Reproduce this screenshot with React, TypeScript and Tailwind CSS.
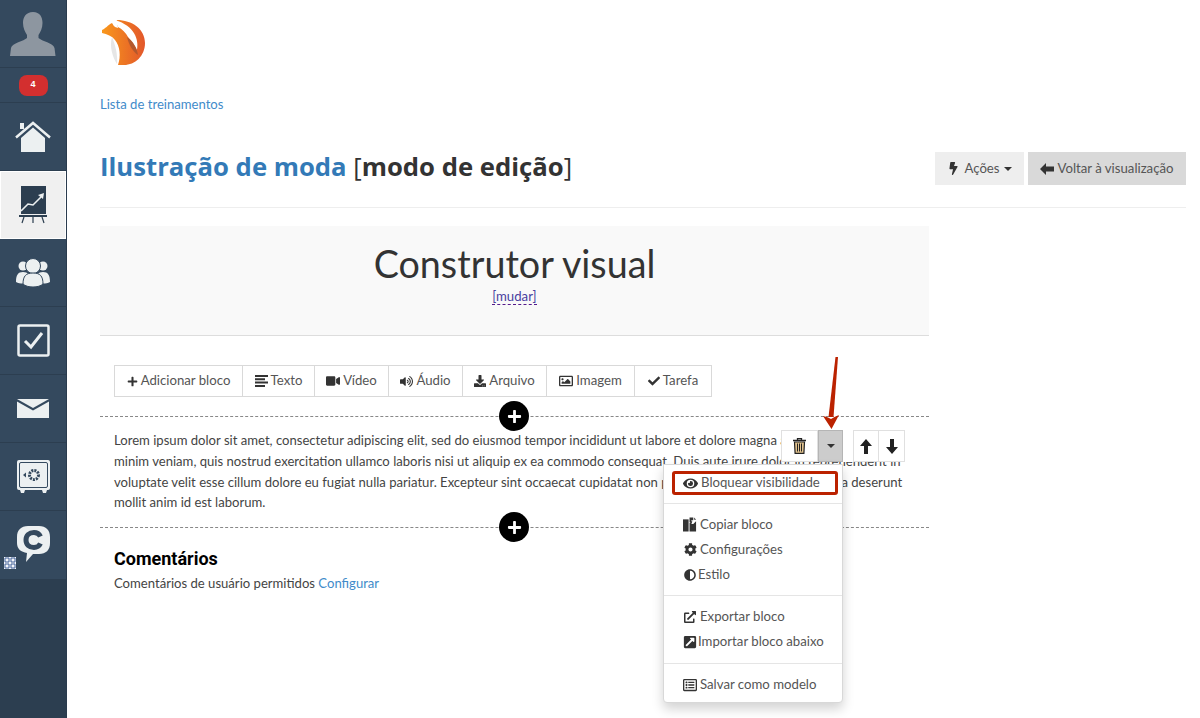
import React from "react";
import {
  FaBolt,
  FaPlus,
  FaVideo,
  FaVolumeUp,
  FaDownload,
  FaRegImage,
  FaCheck,
  FaEye,
  FaCog,
  FaAdjust,
  FaExternalLinkAlt,
  FaExternalLinkSquareAlt,
  FaRegListAlt,
} from "react-icons/fa";

const font = "font-['Lato','Open_Sans',sans-serif]";

const SideRow = ({ active, children }: { active?: boolean; children: React.ReactNode }) => (
  <div
    className={
      active
        ? "h-[68px] flex items-center justify-center bg-[#f0f0f0] border border-white"
        : "h-[68px] flex items-center justify-center border-b border-[#2c3e50]"
    }
  >
    {children}
  </div>
);

const Sidebar = () => (
  <aside className="w-[67px] shrink-0 h-[718px] bg-[#2c3e50] flex flex-col border-r border-[#2a3b4e]">
    <div className="bg-[#34495e]">
      <SideRow>
        <svg width="46" height="44" viewBox="0 0 46 44">
          <path
            d="M23 0c7 0 9.500 5 9.500 11 0 5-2 9-4 12v3c3 3 15 5 16 10l1 8H0l1-8c1-5 13-7 16-10v-3c-2-3-4-7-4-12C13 5 16 0 23 0z"
            fill="#8d96a0"
          />
        </svg>
      </SideRow>
      <div className="h-[35px] flex items-center justify-center border-b border-[#2c3e50]">
        <span className="w-[29px] h-[21px] rounded-lg bg-[#d32f2f] text-white text-[9px] font-bold flex items-center justify-center font-['Liberation_Sans',sans-serif]">
          4
        </span>
      </div>
      <SideRow>
        <svg width="36" height="32" viewBox="0 0 36 32">
          <path d="M1 16.500 18 2l17 14.500" fill="none" stroke="#ecf0f1" strokeWidth="2.500" />
          <path d="M6 17 18 6.500 30 17v14H6z" fill="#ecf0f1" />
          <rect x="5" y="2" width="4" height="6" fill="#ecf0f1" />
        </svg>
      </SideRow>
      <SideRow active>
        <svg width="28" height="38" viewBox="0 0 28 38">
          <rect x="2" y="0" width="25" height="28" fill="#2c3e50" />
          <path d="M2 25l7-7 5 1 8-8" fill="none" stroke="#ecf0f1" strokeWidth="1.600" />
          <path d="M19 9l6-2-1 6z" fill="#ecf0f1" />
          <path d="M0 29h28v2H0z" fill="#2c3e50" />
          <path d="M5 31l-2 6M14 31v6M23 31l2 6" stroke="#2c3e50" strokeWidth="1.200" />
        </svg>
      </SideRow>
      <SideRow>
        <svg width="34" height="30" viewBox="0 0 34 30" fill="#ecf0f1">
          <circle cx="7" cy="8" r="4.500" />
          <circle cx="27" cy="8" r="4.500" />
          <path d="M0 24c0-7 2-10 7-10s7 3 7 10c-4 2-10 2-14 0zM20 24c0-7 2-10 7-10s7 3 7 10c-4 2-10 2-14 0z" />
          <circle cx="17" cy="8" r="7.500" stroke="#34495e" strokeWidth="1" />
          <path d="M7 26c0-8 3-11 10-11s10 3 10 11c-4 4-16 4-20 0z" stroke="#34495e" strokeWidth="1" />
        </svg>
      </SideRow>
      <SideRow>
        <svg width="33" height="33" viewBox="0 0 33 33">
          <rect x="1.500" y="1.500" width="30" height="30" rx="1.500" fill="none" stroke="#ecf0f1" strokeWidth="2.500" />
          <path d="M8 17l6 6L25 9" fill="none" stroke="#ecf0f1" strokeWidth="3" />
        </svg>
      </SideRow>
      <SideRow>
        <svg width="32" height="19" viewBox="0 0 32 19" fill="#ecf0f1">
          <path d="M0 0h32L16 9z" />
          <path d="M0 2.500l16 9 16-9V19H0z" />
        </svg>
      </SideRow>
      <SideRow>
        <svg width="33" height="33" viewBox="0 0 33 33">
          <rect x="0" y="0" width="33" height="30" rx="2" fill="#ecf0f1" />
          <rect x="2.500" y="2.500" width="28" height="25" rx="1.500" fill="none" stroke="#34495e" strokeWidth="1" />
          <circle cx="17" cy="15" r="4.500" fill="none" stroke="#34495e" strokeWidth="3" strokeDasharray="2 1" />
          <path d="M6 15l3-2.500v5z" fill="#34495e" />
          <path d="M3 30h5l-1 3H4zM25 30h5l-1 3h-3z" fill="#ecf0f1" />
        </svg>
      </SideRow>
      <div className="relative h-[68px] flex items-center justify-center">
        <svg width="33" height="37" viewBox="0 0 33 37" className="mb-[2px]">
          <path
            d="M11 0h11c7 0 11 4 11 11v6c0 7-4 11-11 11h-6l-7 8 1-9C4 26 0 23 0 17v-6C0 4 4 0 11 0z"
            fill="#ecf0f1"
          />
          <path d="M23.500 10.500C22 7.500 20 6.500 17 6.500c-5 0-8 3-8 7.500s3 7.500 8 7.500c3 0 5-1 6.500-4" fill="none" stroke="#34495e" strokeWidth="5" />
        </svg>
        <svg width="12" height="12" viewBox="0 0 12 12" className="absolute left-[4px] top-[46px]">
          <rect width="12" height="12" fill="#f4f6fa" />
          <path d="M1 1h4v4H1zM7 1h4v4H7zM1 7h4v4H1zM7 7h4v4H7z" fill="none" stroke="#3f5f96" strokeWidth="1" />
        </svg>
      </div>
    </div>
  </aside>
);

const AlignIcon = () => (
  <svg width="13" height="12" viewBox="0 0 13 12" fill="currentColor">
    <path d="M0 0h13v2H0zM0 3.300h10v2H0zM0 6.600h13v2H0zM0 10h10v2H0z" />
  </svg>
);

const ArrowLeftIcon = () => (
  <svg width="14" height="12" viewBox="0 0 14 12" fill="currentColor">
    <path d="M0 6l6-6v3.500h8v5H6V12z" />
  </svg>
);

const ArrowUpIcon = () => (
  <svg width="12" height="15" viewBox="0 0 12 15" fill="currentColor">
    <path d="M6 0l6 7H8v8H4V7H0z" />
  </svg>
);

const ArrowDownIcon = () => (
  <svg width="12" height="15" viewBox="0 0 12 15" fill="currentColor">
    <path d="M6 15l6-7H8V0H4v8H0z" />
  </svg>
);

const TrashIcon = () => (
  <svg width="13" height="16" viewBox="0 0 13 16">
    <path d="M4.500 2V.500h4V2M0 2.500h13" fill="none" stroke="#222" strokeWidth="1.300" />
    <path d="M1.500 4h10l-.6 11.300H2.100z" fill="#e3c48f" stroke="#222" strokeWidth="1.200" />
    <path d="M4.500 5.500v8M6.500 5.500v8M8.500 5.500v8" stroke="#222" strokeWidth="1" />
  </svg>
);

const CopyIcon = () => (
  <svg width="15" height="15" viewBox="0 0 15 15" fill="currentColor">
    <path d="M0 2h6v13H0z" />
    <path d="M7 0h4v3h-2v2H7z" />
    <path d="M7 6l2-2h1l-1 3h2l3-3v11H7z" />
    <path d="M12 0l2 2.500h-2z" />
  </svg>
);

const toolItems: { icon: React.ReactNode; label: string; w: string }[] = [
  { icon: <FaPlus size={11} />, label: "Adicionar bloco", w: "w-[128px]" },
  { icon: <AlignIcon />, label: "Texto", w: "w-[72px]" },
  { icon: <FaVideo size={14} />, label: "Vídeo", w: "w-[74px]" },
  { icon: <FaVolumeUp size={13} />, label: "Áudio", w: "w-[74px]" },
  { icon: <FaDownload size={12} />, label: "Arquivo", w: "w-[84px]" },
  { icon: <FaRegImage size={14} />, label: "Imagem", w: "w-[88px]" },
  { icon: <FaCheck size={12} />, label: "Tarefa", w: "w-[76px]" },
];

const Toolbar = () => (
  <div className="flex h-[32px] w-[598px] border border-[#d9d9d9] text-[13.2px] text-[#555]">
    {toolItems.map((t) => (
      <div
        key={t.label}
        className={`${t.w} flex items-center justify-center gap-[3px] border-r border-[#d9d9d9] last:border-r-0`}
      >
        <span className="text-[#333]">{t.icon}</span>
        <span>{t.label}</span>
      </div>
    ))}
  </div>
);

const PlusDot = ({ top }: { top: string }) => (
  <div className={`absolute left-[399px] ${top} w-[30px] h-[30px] rounded-full bg-black flex items-center justify-center text-white`}>
    <FaPlus size={15} />
  </div>
);

const MenuItem = ({ icon, label, gap = "gap-[3px]" }: { icon: React.ReactNode; label: string; gap?: string }) => (
  <div className={`flex items-center ${gap} h-[25px] pl-[19px] text-[13.2px] text-[#555]`}>
    <span className="text-[#333] w-[14px] flex justify-center">{icon}</span>
    <span>{label}</span>
  </div>
);

const Menu = () => (
  <div className="absolute left-[563px] top-[238px] w-[180px] h-[239px] bg-white rounded-b border border-[#d8d8d8] shadow-[0_6px_12px_rgba(0,0,0,0.175)] flex flex-col">
    <div className="h-[39px] border-b border-[#e5e5e5] shrink-0" />
    <div className="h-[92px] pt-[8px] border-b border-[#e5e5e5] shrink-0">
      <MenuItem icon={<CopyIcon />} label="Copiar bloco" />
      <MenuItem icon={<FaCog size={13} />} label="Configurações" />
      <MenuItem icon={<FaAdjust size={12} />} label="Estilo" gap="gap-[1px]" />
    </div>
    <div className="h-[68px] pt-[8px] border-b border-[#e5e5e5] shrink-0">
      <MenuItem icon={<FaExternalLinkAlt size={12} />} label="Exportar bloco" />
      <MenuItem icon={<FaExternalLinkSquareAlt size={14} />} label="Importar bloco abaixo" gap="gap-[1px]" />
    </div>
    <div className="pt-[8px]">
      <MenuItem icon={<FaRegListAlt size={14} />} label="Salvar como modelo" />
    </div>
  </div>
);

const App = () => {
  return (
    <div className={`flex w-[1200px] h-[718px] overflow-hidden bg-white ${font}`}>
      <Sidebar />
      <main className="ml-[33px] w-[1086px] relative">
        <svg width="46" height="46" viewBox="0 0 46 46" className="mt-[20px] block">
          <defs>
            <linearGradient id="fox" x1="0" y1="0" x2="1" y2="0">
              <stop offset="0" stopColor="#f9981c" />
              <stop offset="1" stopColor="#e2572b" />
            </linearGradient>
          </defs>
          <path d="M12 17C9 27 13 38 17 44c1-9-2-20-5-27z" fill="#e6e6e6" />
          <path d="M16.700 0C32 0 45 9 45 23c0 13-10 22-21 22h-6c3-9 2-19-3-25-3-4-8-6-13-7v-3c3-1 6-5 10-7 2 3 2 4 6 5z" fill="url(#fox)" />
          <path d="M15 0l3 7c4 2 8 6 10 10 4 4 7 9 9 13 2-10-2-24-22-30z" fill="#fff" />
          <path d="M27 17c6 4 10 11 11 18-5-3-9-10-11-18z" fill="#a9562f" opacity=".85" />
        </svg>

        <div className="mt-[31px] text-[13.1px] leading-[15px] text-[#428bca]">Lista de treinamentos</div>

        <div className="mt-[36px] h-[60px] border-b border-[#eeeeee] flex items-start justify-between">
          <h1 className="text-[25.7px] leading-[36px] font-bold text-[#333] font-['Open_Sans',sans-serif] mt-[1px]">
            <span className="text-[#337ab7]">Ilustração de moda</span>{" "}
            <span className="font-normal">[</span>modo de edição<span className="font-normal">]</span>
          </h1>
          <div className="flex gap-1 text-[13.2px] text-[#555] mt-[4px]">
            <div className="w-[89px] h-[33px] bg-[#eeeeee] flex items-center justify-center gap-1">
              <FaBolt size={13} className="text-[#333]" />
              <span>Ações</span>
              <span className="w-0 h-0 border-x-[4px] border-x-transparent border-t-[4px] border-t-[#333]" />
            </div>
            <div className="w-[158px] h-[33px] bg-[#d9d9d9] flex items-center justify-center gap-[3px]">
              <span className="text-[#333]">
                <ArrowLeftIcon />
              </span>
              <span>Voltar à visualização</span>
            </div>
          </div>
        </div>

        <section className="relative w-[829px] mt-[18px]">
          <div className="h-[110px] bg-[#f9f9f9] border-b border-[#dddddd] flex flex-col items-center">
            <div className="mt-[15px] text-[37.7px] leading-[46px] text-[#333]">Construtor visual</div>
            <div className="mt-[1px] text-[13.2px] leading-[16px] border-b border-dashed border-[#551a8b]">
              <span className="text-[#4a3f9f]">[mudar]</span>
            </div>
          </div>

          <div className="mt-[29px] ml-[14px]">
            <Toolbar />
          </div>

          <div className="mt-[19px] border-t border-dashed border-[#888]" />
          <div className="px-[14px] pt-[13px] pb-[14px] border-b border-dashed border-[#888] text-[13.1px] leading-[20.800px] text-[#444]">
            Lorem ipsum dolor sit amet, consectetur adipiscing elit, sed do eiusmod tempor incididunt ut labore et dolore magna aliqua. Ut enim ad
            minim veniam, quis nostrud exercitation ullamco laboris nisi ut aliquip ex ea commodo consequat. Duis aute irure dolor in reprehenderit in
            voluptate velit esse cillum dolore eu fugiat nulla pariatur. Excepteur sint occaecat cupidatat non proident, sunt in culpa qui officia deserunt
            mollit anim id est laborum.
          </div>

          <div className="px-[14px]">
            <h2 className="mt-[20px] text-[18px] leading-[22px] font-bold text-black font-['Roboto',sans-serif]">Comentários</h2>
            <p className="mt-[3px] text-[13.1px] leading-[20px] text-[#444]">
              Comentários de usuário permitidos <span className="text-[#428bca]">Configurar</span>
            </p>
          </div>

          <PlusDot top="top-[175px]" />
          <PlusDot top="top-[286px]" />

          <div className="absolute left-[681px] top-[204px] flex h-[32px] bg-white">
            <div className="w-[37px] flex items-center justify-center border border-[#e0e0e0]">
              <TrashIcon />
            </div>
            <div className="w-[25px] flex items-center justify-center bg-[#cccccc] border border-[#b5b5b5]">
              <span className="w-0 h-0 border-x-[4px] border-x-transparent border-t-[4px] border-t-[#333]" />
            </div>
            <div className="w-[10px]" />
            <div className="w-[26px] flex items-center justify-center border border-[#e0e0e0] text-[#222]">
              <ArrowUpIcon />
            </div>
            <div className="w-[26px] flex items-center justify-center border border-l-0 border-[#e0e0e0] text-[#222]">
              <ArrowDownIcon />
            </div>
          </div>

          <Menu />

          {/* highlighted first item with the callout box */}
          <div className="absolute left-[572px] top-[245px] w-[166px] h-[24px] border-[3px] border-[#bb2200] rounded-[3px] bg-white flex items-center pl-[8px] gap-[3px] text-[13.2px] text-[#555]">
            <FaEye size={15} className="text-[#333]" />
            <span>Bloquear visibilidade</span>
          </div>

          <svg width="17" height="74" viewBox="0 0 17 74" className="absolute left-[723px] top-[130px]">
            <path d="M12.500 1H15L10.500 61h-5z" fill="#bb2200" />
            <path d="M0 60q5 1 8 3 3-2 8-4L8.500 73z" fill="#bb2200" />
          </svg>
        </section>
      </main>
    </div>
  );
};

export default App;
